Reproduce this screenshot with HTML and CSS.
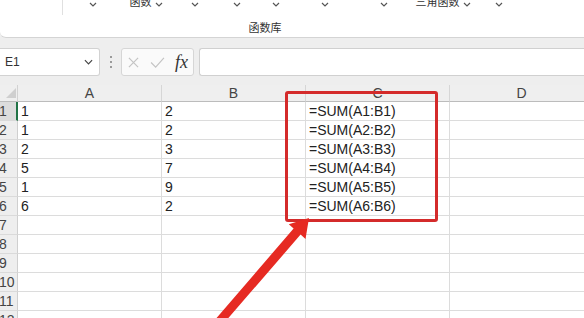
FILE: index.html
```html
<!DOCTYPE html>
<html>
<head>
	<title>函数库</title>
	<meta charset="utf-8">
	<link rel="stylesheet" href="styles.css">
</head>
<body>

	<div id="page">

		<div id="ribbon">
			<div id="ribbon-buttons">
				<div class="rb rb-first"></div>
				<div class="rb"><svg class="chev" viewBox="0 0 8 5"><path d="M1 1 L4 4 L7 1"/></svg></div>
				<div class="rb"><span>函数</span><svg class="chev" viewBox="0 0 8 5"><path d="M1 1 L4 4 L7 1"/></svg></div>
				<div class="rb"><svg class="chev" viewBox="0 0 8 5"><path d="M1 1 L4 4 L7 1"/></svg></div>
				<div class="rb"><svg class="chev" viewBox="0 0 8 5"><path d="M1 1 L4 4 L7 1"/></svg></div>
				<div class="rb"><svg class="chev" viewBox="0 0 8 5"><path d="M1 1 L4 4 L7 1"/></svg></div>
				<div class="rb"><svg class="chev" viewBox="0 0 8 5"><path d="M1 1 L4 4 L7 1"/></svg></div>
				<div class="rb"><svg class="chev" viewBox="0 0 8 5"><path d="M1 1 L4 4 L7 1"/></svg></div>
				<div class="rb"><span>三角函数</span><svg class="chev" viewBox="0 0 8 5"><path d="M1 1 L4 4 L7 1"/></svg></div>
				<div class="rb"><svg class="chev" viewBox="0 0 8 5"><path d="M1 1 L4 4 L7 1"/></svg></div>
			</div>
			<div id="group-label">函数库</div>
		</div>



		<div id="formula-bar">
			<div id="name-box">
				<span>E1</span>
				<svg class="name-chev" viewBox="0 0 10 6"><path d="M1 1 L5 5 L9 1"/></svg>
			</div>
			<div id="more-dots"><i></i><i></i><i></i></div>
			<div id="fx-box">
				<svg class="fx-icon" viewBox="0 0 12 12"><path d="M1 1 L11 11 M11 1 L1 11"/></svg>
				<svg class="fx-icon check" viewBox="0 0 16 12"><path d="M1 6 L6 11 L15 1"/></svg>
				<span class="fx">fx</span>
			</div>
			<div id="formula-input"></div>
		</div>



		<div id="sheet">
			<div class="corner"><span class="corner-tri"></span></div>
			<div class="col-head">A</div>
			<div class="col-head">B</div>
			<div class="col-head">C</div>
			<div class="col-head">D</div>

			<div class="row-head active">1</div><div class="cell">1</div><div class="cell">2</div><div class="cell">=SUM(A1:B1)</div><div class="cell"></div>
			<div class="row-head">2</div><div class="cell">1</div><div class="cell">2</div><div class="cell">=SUM(A2:B2)</div><div class="cell"></div>
			<div class="row-head">3</div><div class="cell">2</div><div class="cell">3</div><div class="cell">=SUM(A3:B3)</div><div class="cell"></div>
			<div class="row-head">4</div><div class="cell">5</div><div class="cell">7</div><div class="cell">=SUM(A4:B4)</div><div class="cell"></div>
			<div class="row-head">5</div><div class="cell">1</div><div class="cell">9</div><div class="cell">=SUM(A5:B5)</div><div class="cell"></div>
			<div class="row-head">6</div><div class="cell">6</div><div class="cell">2</div><div class="cell">=SUM(A6:B6)</div><div class="cell"></div>
			<div class="row-head">7</div><div class="cell"></div><div class="cell"></div><div class="cell"></div><div class="cell"></div>
			<div class="row-head">8</div><div class="cell"></div><div class="cell"></div><div class="cell"></div><div class="cell"></div>
			<div class="row-head">9</div><div class="cell"></div><div class="cell"></div><div class="cell"></div><div class="cell"></div>
			<div class="row-head">10</div><div class="cell"></div><div class="cell"></div><div class="cell"></div><div class="cell"></div>
			<div class="row-head">11</div><div class="cell"></div><div class="cell"></div><div class="cell"></div><div class="cell"></div>
			<div class="row-head">12</div><div class="cell"></div><div class="cell"></div><div class="cell"></div><div class="cell"></div>
		</div>



		<!-- annotation drawn over the sheet -->
		<div id="mark-box"></div>
		<svg id="mark-arrow" viewBox="0 0 584 318">
			<polygon points="309,218 305.5,239 300.6,234.6 222.5,324.8 215.5,319.2 293.6,228.5 288.8,224.2"/>
		</svg>

	</div>

</body>
</html>
```

FILE: styles.css
```css
* {
	margin: 0;
	padding: 0;
	box-sizing: border-box;
}

body {
	width: 584px;
	height: 318px;
	overflow: hidden;
	background-color: #eeeeee;
	font-family: "Liberation Sans", "Noto Sans CJK SC", sans-serif;
	color: #222;
}

#page {
	position: relative;
	width: 584px;
	height: 318px;
	overflow: hidden;
}




	#ribbon {
		height: 38px;
		background-color: #ffffff;
		border-bottom: 1px solid #d4d4d4;
		border-bottom-left-radius: 6px;
		overflow: hidden;
	}

		#ribbon-buttons {
			display: grid;
			grid-template-columns: 63px 60px 46px 52px 32px 46px 52px 66px 52px 60px;
			grid-template-rows: 14px;
			margin-top: -5px;
		}

			.rb {
				display: flex;
				justify-content: center;
				align-items: flex-end;
				gap: 3px;
				height: 14px;
				font-size: 11px;
				line-height: 14px;
				color: #333;
				white-space: nowrap;
			}

				.rb span,
				.rb svg {
					flex-shrink: 0;
				}

			.rb-first {
				height: 20px;
				border-right: 1px solid #e0e0e0;
			}

			.chev {
				width: 8px;
				height: 5px;
				margin-bottom: 2px;
				fill: none;
				stroke: #555;
				stroke-width: 1.2;
			}

		#group-label {
			width: 530px;
			margin-top: 12px;
			text-align: center;
			font-size: 11px;
			line-height: 14px;
			color: #333;
		}




	#formula-bar {
		display: flex;
		height: 28px;
		margin-top: 10px;
	}

		#name-box {
			display: flex;
			justify-content: space-between;
			align-items: center;
			width: 100px;
			padding: 0 6px 0 5px;
			background-color: #ffffff;
			border: 1px solid #d2d2d2;
			border-left: none;
			border-radius: 0 3px 3px 0;
			font-size: 12px;
			color: #333;
		}

			.name-chev {
				width: 9px;
				height: 6px;
				fill: none;
				stroke: #444;
				stroke-width: 1.3;
			}

		#more-dots {
			display: flex;
			flex-direction: column;
			justify-content: center;
			align-items: center;
			gap: 3px;
			width: 21px;
		}

			#more-dots i {
				width: 2px;
				height: 2px;
				background-color: #9a9a9a;
			}

		#fx-box {
			display: flex;
			align-items: center;
			width: 73px;
			padding-left: 6px;
			background-color: #fafafa;
			border: 1px solid #d6d6d6;
			border-radius: 3px;
		}

			.fx-icon {
				width: 11px;
				height: 11px;
				fill: none;
				stroke: #c4c4c4;
				stroke-width: 1.3;
			}

			.check {
				width: 15px;
				height: 11px;
				margin-left: 11px;
			}

			.fx {
				margin-left: 10px;
				font-family: "Liberation Serif", serif;
				font-style: italic;
				font-size: 18px;
				line-height: 20px;
				color: #333;
			}

		#formula-input {
			flex: 1;
			margin-left: 5px;
			background-color: #ffffff;
			border: 1px solid #d0d0d0;
			border-right: none;
			border-radius: 3px 0 0 3px;
		}




	#sheet {
		display: grid;
		grid-template-columns: 18px repeat(4, 144px);
		grid-template-rows: 17px;
		grid-auto-rows: 19px;
		width: 594px;
		margin-top: 9px;
	}

		.corner,
		.col-head {
			background-color: #efefef;
			border-bottom: 1px solid #bcbcbc;
		}

		.corner {
			display: flex;
			justify-content: flex-end;
			align-items: flex-end;
			padding: 0 1px 3px 0;
			border-right: 1px solid #d2d2d2;
		}

			.corner-tri {
				width: 0;
				height: 0;
				border-left: 10px solid transparent;
				border-bottom: 10px solid #cfcfcf;
			}

		.col-head {
			border-right: 1px solid #d6d6d6;
			text-align: center;
			font-size: 14px;
			line-height: 16px;
			color: #444;
		}

		.row-head {
			background-color: #eeeeee;
			border-right: 1px solid #cfcfcf;
			border-bottom: 1px solid #dadada;
			font-size: 14px;
			line-height: 18px;
			color: #444;
			text-indent: -1px;
		}

		.row-head.active {
			background-color: #dcdcdc;
			border-right: 2px solid #217346;
		}

		.cell {
			padding-left: 3px;
			background-color: #ffffff;
			border-right: 1px solid #dcdcdc;
			border-bottom: 1px solid #dcdcdc;
			font-size: 14px;
			line-height: 18px;
			color: #222;
			white-space: nowrap;
		}




	#mark-box {
		position: absolute;
		left: 285px;
		top: 91px;
		width: 153px;
		height: 131px;
		border: 3px solid #d42b2b;
		border-radius: 3px;
	}

	#mark-arrow {
		position: absolute;
		left: 0;
		top: 0;
		width: 584px;
		height: 318px;
		fill: #e62a22;
	}
```
